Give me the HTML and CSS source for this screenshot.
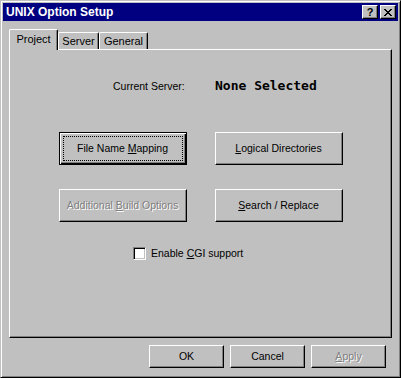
FILE: index.html
```html
<!DOCTYPE html>
<html lang="en">
<head>
	<meta charset="UTF-8">
	<title>UNIX Option Setup</title>
	<link rel="stylesheet" href="styles.css">
</head>
<body>
	<div class="window">
		<div class="titlebar">
			<span class="title">UNIX Option Setup</span>
			<div class="caption-btns">
				<div class="cap-btn help">?</div>
				<div class="cap-btn close">
					<svg width="8" height="7" viewBox="0 0 8 7" shape-rendering="crispEdges"><path fill="#000" d="M0 0h2v1H0zM6 0h2v1H6zM1 1h2v1H1zM5 1h2v1H5zM2 2h4v1H2zM3 3h2v1H3zM2 4h4v1H2zM1 5h2v1H1zM5 5h2v1H5zM0 6h2v1H0zM6 6h2v1H6z"/></svg>
				</div>
			</div>
		</div>

		<div class="tabs">
			<div class="tab-strip">
				<div class="tab active">Project</div>
				<div class="tab t-server">Server</div>
				<div class="tab t-general">General</div>
			</div>
			<div class="tab-panel">
				<div class="server-row">
					<span class="label">Current Server:</span>
					<span class="value">None Selected</span>
				</div>
				<div class="btn-grid">
					<div class="btn default"><span>File Name <u>M</u>apping</span></div>
					<div class="btn"><span><u>L</u>ogical Directories</span></div>
					<div class="btn disabled"><span>Additional <u>B</u>uild Options</span></div>
					<div class="btn"><span><u>S</u>earch / Replace</span></div>
				</div>
				<div class="check">
					<span class="box"></span>
					<span>Enable <u>C</u>GI support</span>
				</div>
			</div>
		</div>

		<div class="dlg-buttons">
			<div class="btn small"><span>OK</span></div>
			<div class="btn small"><span>Cancel</span></div>
			<div class="btn small disabled"><span><u>A</u>pply</span></div>
		</div>
	</div>
</body>
</html>
```

FILE: styles.css
```css
* {margin: 0;padding: 0;box-sizing: border-box;}
body {background: #c0c0c0;font-family: "Liberation Sans", Arial, sans-serif;font-size: 10.5px;color: #000;}

/* window frame */
.window {width: 401px;height: 378px;background: #c0c0c0;border: 1px solid;border-color: #c0c0c0 #000 #000 #c0c0c0;box-shadow: inset 1px 1px #fff, inset -1px -1px #808080;padding: 2px;}

.titlebar {height: 18px;background: #000080;color: #fff;display: flex;align-items: center;justify-content: space-between;padding: 0 2px 0 3px;}
.title {font-weight: bold;font-size: 12px;line-height: 18px;}
.caption-btns {display: flex;gap: 2px;}
.cap-btn {width: 16px;height: 14px;background: #c0c0c0;border: 1px solid;border-color: #fff #000 #000 #fff;box-shadow: inset -1px -1px #808080;display: flex;align-items: center;justify-content: center;color: #000;font-weight: bold;font-size: 11px;line-height: 12px;}
.cap-btn svg {display: block;margin-top: 1px;}

/* tab control */
.tabs {margin: 8px 6px 0 6px;}
.tab-strip {display: flex;align-items: flex-end;height: 20px;}
.tab {height: 17px;border: 1px solid;border-bottom: none;border-color: #fff #000 #000 #fff;border-top-left-radius: 2px;border-top-right-radius: 2px;box-shadow: inset -1px 0 #808080;text-align: center;line-height: 15px;padding-top: 1px;font-size: 11px;}
.tab.active {width: 49px;height: 21px;margin-bottom: -1px;position: relative;z-index: 1;background: #c0c0c0;padding-top: 2px;}
.t-server {width: 41px;}
.t-general {width: 49px;}

.tab-panel {height: 289px;border: 1px solid;border-color: #fff #000 #000 #fff;box-shadow: inset -1px -1px #808080;}

.server-row {display: flex;align-items: baseline;margin-top: 28px;padding-left: 103px;line-height: 16px;}
.server-row .label {width: 102px;}
.server-row .value {font-family: "DejaVu Sans Mono", "Liberation Mono", monospace;font-weight: bold;font-size: 13px;}

.btn-grid {display: grid;grid-template-columns: 128px 128px;grid-auto-rows: 33px;column-gap: 28px;row-gap: 24px;justify-content: center;margin-top: 38px;}

/* push buttons */
.btn {background: #c0c0c0;border: 1px solid;border-color: #fff #000 #000 #fff;box-shadow: inset -1px -1px #808080;display: flex;align-items: center;justify-content: center;line-height: 13px;white-space: nowrap;}
.btn.default {border-color: #000;box-shadow: inset 1px 1px #fff, inset -1px -1px #000, inset -2px -2px #808080;outline: 1px dotted #000;outline-offset: -5px;}
.btn.disabled {color: #808080;text-shadow: 1px 1px 0 #fff;}
.btn.small {width: 75px;height: 23px;}

/* checkbox */
.check {display: flex;align-items: center;margin-top: 25px;padding-left: 123px;line-height: 13px;}
.check .box {width: 13px;height: 13px;background: #fff;border: 1px solid;border-color: #808080 #fff #fff #808080;box-shadow: inset 1px 1px #000, inset -1px -1px #c0c0c0;margin-right: 5px;}

.dlg-buttons {display: flex;justify-content: flex-end;gap: 6px;margin-top: 7px;padding-right: 12px;}
```
